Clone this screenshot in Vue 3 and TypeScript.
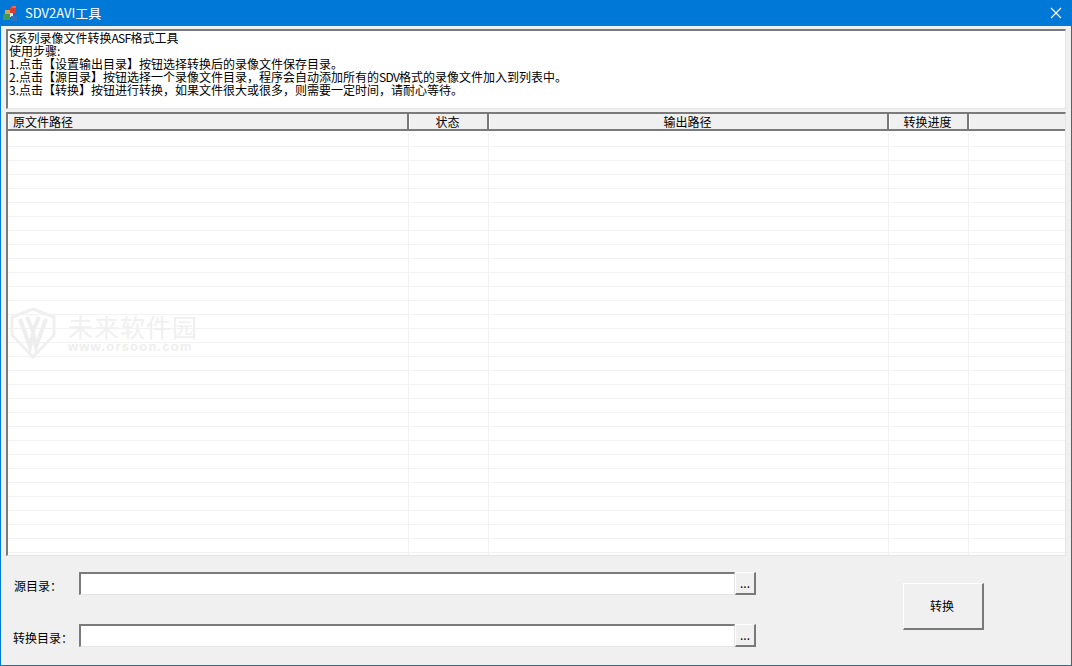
<script setup lang="ts">
const title = "SDV2AVI工具";

// split on runs of capitals so the latin bits can be squeezed a little
const helpLines = [
  "S系列录像文件转换ASF格式工具",
  "使用步骤:",
  "1.点击【设置输出目录】按钮选择转换后的录像文件保存目录。",
  "2.点击【源目录】按钮选择一个录像文件目录，程序会自动添加所有的SDV格式的录像文件加入到列表中。",
  "3.点击【转换】按钮进行转换，如果文件很大或很多，则需要一定时间，请耐心等待。",
].map((line) => line.split(/([A-Z]+)/));

const columns = [
  { label: "原文件路径", width: 401, left: true },
  { label: "状态", width: 80, left: false },
  { label: "输出路径", width: 400, left: false },
  { label: "转换进度", width: 80, left: false },
  { label: "", width: 97, left: false },
];

const rows = Array.from({ length: 31 }, (_, i) => i);
</script>

<template>
  <div class="window">
    <div class="titlebar">
      <svg class="app-icon" width="16" height="18" viewBox="0 0 16 18">
        <rect x="7" y="3" width="6" height="6" fill="#dc3a2c" />
        <rect x="9" y="2" width="4" height="2" fill="#e9695c" />
        <rect x="2" y="6" width="5" height="5" fill="#d9a25c" />
        <rect x="0" y="10" width="7" height="6" fill="#3f9a58" />
        <rect x="7" y="9" width="3" height="4" fill="#e8e6dc" />
        <rect x="8" y="12" width="6" height="5" fill="#2f74c4" />
      </svg>
      <span class="title">{{ title }}</span>
      <svg class="close" width="12" height="12" viewBox="0 0 12 12">
        <path d="M1 1 L11 11 M11 1 L1 11" stroke="#fff" stroke-width="1.2" fill="none" />
      </svg>
    </div>

    <div class="content">
      <div class="help sunken">
        <div v-for="(parts, n) in helpLines" :key="n">
          <template v-for="(part, i) in parts" :key="i">
            <span v-if="i % 2" class="latin">{{ part }}</span>
            <template v-else>{{ part }}</template>
          </template>
        </div>
      </div>

      <div class="list sunken">
        <div class="list-head">
          <div
            v-for="col in columns"
            :key="col.label"
            class="head-cell"
            :class="{ left: col.left }"
            :style="{ width: col.width + 'px' }"
          >{{ col.label }}</div>
        </div>
        <div class="list-body">
          <div v-for="row in rows" :key="row" class="row">
            <div
              v-for="col in columns"
              :key="col.label"
              class="cell"
              :style="{ width: col.width + 'px' }"
            ></div>
          </div>
        </div>
        <div class="watermark">
          <svg width="50" height="52" viewBox="0 0 50 52">
            <path d="M25 2 L46 10 L46 28 L25 50 L4 28 L4 10 Z" fill="none" stroke="#f0f0f0" stroke-width="3" />
            <path d="M12 12 L22 40 L25 26 L28 40 L38 12 M19 10 L25 24 L31 10" fill="none" stroke="#eeeeee" stroke-width="4" />
          </svg>
          <div class="wm-text">
            <div class="wm-name">未来软件园</div>
            <div class="wm-url">www.orsoon.com</div>
          </div>
        </div>
      </div>

      <div class="bottom">
        <div class="fields">
          <div class="field">
            <label class="field-label">源目录：</label>
            <input class="path sunken" type="text" />
            <button class="browse raised">...</button>
          </div>
          <div class="field">
            <label class="field-label">转换目录：</label>
            <input class="path sunken" type="text" />
            <button class="browse raised">...</button>
          </div>
        </div>
        <button class="convert raised">转换</button>
      </div>
    </div>
  </div>
</template>

<style>
html,
body {
  margin: 0;
  background: #f0f0f0;
}
</style>

<style scoped>
.window {
  width: 1072px;
  height: 666px;
  box-sizing: border-box;
  border: 1px solid #0078d7;
  border-top: none;
  background: #f0f0f0;
  display: flex;
  flex-direction: column;
  font-family: "Noto Sans CJK SC", "Liberation Sans", sans-serif;
  font-size: 12px;
  color: #000;
  overflow: hidden;
}

.titlebar {
  height: 26px;
  flex: none;
  background: #0078d7;
  color: #fff;
  display: flex;
  align-items: center;
  padding: 0 9px 0 2px;
}

.app-icon {
  margin-right: 6px;
}

.title {
  flex: 1;
  font-size: 13px;
  padding-bottom: 2px;
}

.content {
  flex: 1;
  display: flex;
  flex-direction: column;
  padding: 3px 5px 0 5px;
  min-height: 0;
}

.sunken {
  box-sizing: border-box;
  border-style: solid;
  border-width: 2px 1px 1px 2px;
  border-color: #7a7a7a #e4e4e4 #e4e4e4 #7a7a7a;
  background: #fff;
}

.raised {
  box-sizing: border-box;
  border-style: solid;
  border-width: 1px 2px 2px 1px;
  border-color: #ffffff #7a7a7a #7a7a7a #ffffff;
  background: #f0f0f0;
  font-family: inherit;
  font-size: 12px;
  padding: 0;
  color: #000;
}

.help {
  height: 80px;
  flex: none;
  padding: 0 0 0 1px;
  line-height: 13px;
  white-space: nowrap;
  overflow: hidden;
}

.latin {
  letter-spacing: -0.7px;
}

.list {
  height: 444px;
  flex: none;
  margin-top: 3px;
  position: relative;
  overflow: hidden;
}

.list-head {
  display: flex;
  height: 15px;
  background: #f0f0f0;
  border-bottom: 2px solid #7a7a7a;
  box-sizing: content-box;
}

.head-cell {
  box-sizing: border-box;
  flex: none;
  text-align: center;
  line-height: 16px;
  padding-right: 2px;
  border-right: 2px solid #7a7a7a;
  border-left: 1px solid #fff;
}

.head-cell.left {
  text-align: left;
  padding-left: 4px;
}

.head-cell:last-child {
  border-right: none;
}

.list-body {
  padding-top: 2px;
}

.row {
  display: flex;
  height: 13px;
  border-bottom: 1px solid #f2f2f2;
  box-sizing: content-box;
}

.cell {
  box-sizing: border-box;
  flex: none;
  border-right: 1px solid #f2f2f2;
}

.watermark {
  position: absolute;
  left: 0;
  top: 193px;
  display: flex;
  align-items: center;
  gap: 10px;
  pointer-events: none;
}

.wm-name {
  font-size: 25px;
  line-height: 28px;
  letter-spacing: 1px;
  color: #f0f0f0;
}

.wm-url {
  font-size: 13px;
  line-height: 14px;
  letter-spacing: 1.2px;
  color: #eeeeee;
  font-family: "Liberation Sans", sans-serif;
  font-weight: bold;
}

.bottom {
  flex: 1;
  display: flex;
  min-height: 0;
}

.fields {
  width: 751px;
  flex: none;
  display: flex;
  flex-direction: column;
  gap: 29px;
  padding-top: 16px;
}

.field {
  display: flex;
  height: 23px;
  align-items: stretch;
}

.field-label {
  width: 73px;
  flex: none;
  line-height: 27px;
  box-sizing: border-box;
  padding-left: 8px;
}

.field:nth-child(2) .field-label {
  padding-left: 7px;
}

.path {
  width: 656px;
  flex: none;
  padding: 0;
  outline: none;
}

.browse {
  width: 21px;
  flex: none;
  line-height: 12px;
}

.convert {
  width: 81px;
  height: 47px;
  margin-left: 146px;
  margin-top: 27px;
  padding: 0 2px 2px 0;
  flex: none;
}
</style>
